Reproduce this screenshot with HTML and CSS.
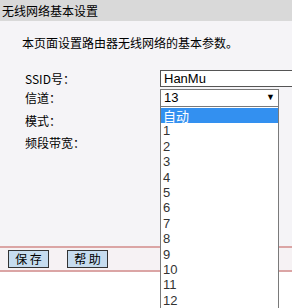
FILE: index.html
```html
<!DOCTYPE html>
<html lang="zh-CN">
<head>
	<meta charset="UTF-8">
	<title>无线网络基本设置</title>
	<link rel="stylesheet" href="styles.css">
</head>
<body>
	<div class="title">无线网络基本设置</div>
	<div class="content">
		<p class="intro">本页面设置路由器无线网络的基本参数。</p>
		<div class="row row-ssid">
			<span class="label">SSID号：</span>
			<span class="input">HanMu</span>
		</div>
		<div class="row row-channel">
			<span class="label">信道：</span>
			<span class="select">13<i class="arrow">▼</i></span>
		</div>
		<div class="row row-mode">
			<span class="label">模式：</span>
		</div>
		<div class="row row-band">
			<span class="label">频段带宽：</span>
		</div>
	</div>
	<div class="bar">
		<button class="btn">保 存</button>
		<button class="btn">帮 助</button>
	</div>
	<div class="rest"></div>

	<ul class="options">
		<li class="on">自动</li>
		<li>1</li>
		<li>2</li>
		<li>3</li>
		<li>4</li>
		<li>5</li>
		<li>6</li>
		<li>7</li>
		<li>8</li>
		<li>9</li>
		<li>10</li>
		<li>11</li>
		<li>12</li>
	</ul>
</body>
</html>
```
FILE: styles.css
```css
html, body{
	margin:0;
	padding:0;
	background:#fff;
	height:308px;
	overflow:hidden;
	font-family:"Noto Sans CJK SC", sans-serif;
	font-size:12px;
	color:#000;
}
.title{
	height:21px;
	line-height:21px;
	padding-left:2px;
	background:#d9d9d9;
}
.content{
	height:225px;
	background:#f5f4f7;
	overflow:hidden;
}
.intro{
	margin:0;
	padding:13px 0 0 22px;
	line-height:18px;
	height:35px;
}
.row{
	display:flex;
	align-items:center;
	padding-left:25px;
}
.row-ssid{ height:19px; }
.row-channel{ height:19px; }
.row-mode{ height:26px; }
.row-band{ height:18px; }
.label{
	width:135px;
	flex:none;
}
.input, .select{
	box-sizing:border-box;
	height:17px;
	line-height:15px;
	padding-left:3px;
	font-family:"Liberation Sans", sans-serif;
	font-size:13px;
	background:#fff;
	flex:none;
}
.input{
	width:140px;
	border:1px solid #555;
	border-right:none;
}
.select{
	width:119px;
	height:18px;
	border:1px solid #7a7a7a;
	display:flex;
	justify-content:space-between;
	align-items:center;
}
.arrow{
	font-style:normal;
	font-size:9px;
	padding-right:3px;
}
.bar{
	height:22px;
	border-top:2px solid #dba5a5;
	border-bottom:2px solid #dba5a5;
	background:#f6f2f4;
	display:flex;
	align-items:center;
	gap:18px;
	padding-left:8px;
}
.btn{
	box-sizing:border-box;
	width:41px;
	height:18px;
	padding:0;
	border:1px solid #333;
	background:#c6dcef;
	font-family:"Noto Sans CJK SC", sans-serif;
	font-size:12px;
	line-height:16px;
	color:#000;
}
.rest{
	height:36px;
	background:#fff;
}
/* open channel list */
.options{
	position:absolute;
	left:160px;
	top:106px;
	width:119px;
	height:202px;
	overflow:hidden;
	box-sizing:border-box;
	margin:0;
	padding:1px 0 0 0;
	list-style:none;
	background:#fff;
	border:1px solid #7a7a7a;
	border-bottom:none;
	font-family:"Liberation Sans", "Noto Sans CJK SC", sans-serif;
	font-size:13px;
}
.options li{
	height:15.4px;
	line-height:15.4px;
	padding-left:2px;
	color:#333;
}
.options li.on{
	background:#3390f0;
	color:#fff;
	font-family:"Noto Sans CJK SC", sans-serif;
	font-size:13px;
	line-height:15px;
}
```
